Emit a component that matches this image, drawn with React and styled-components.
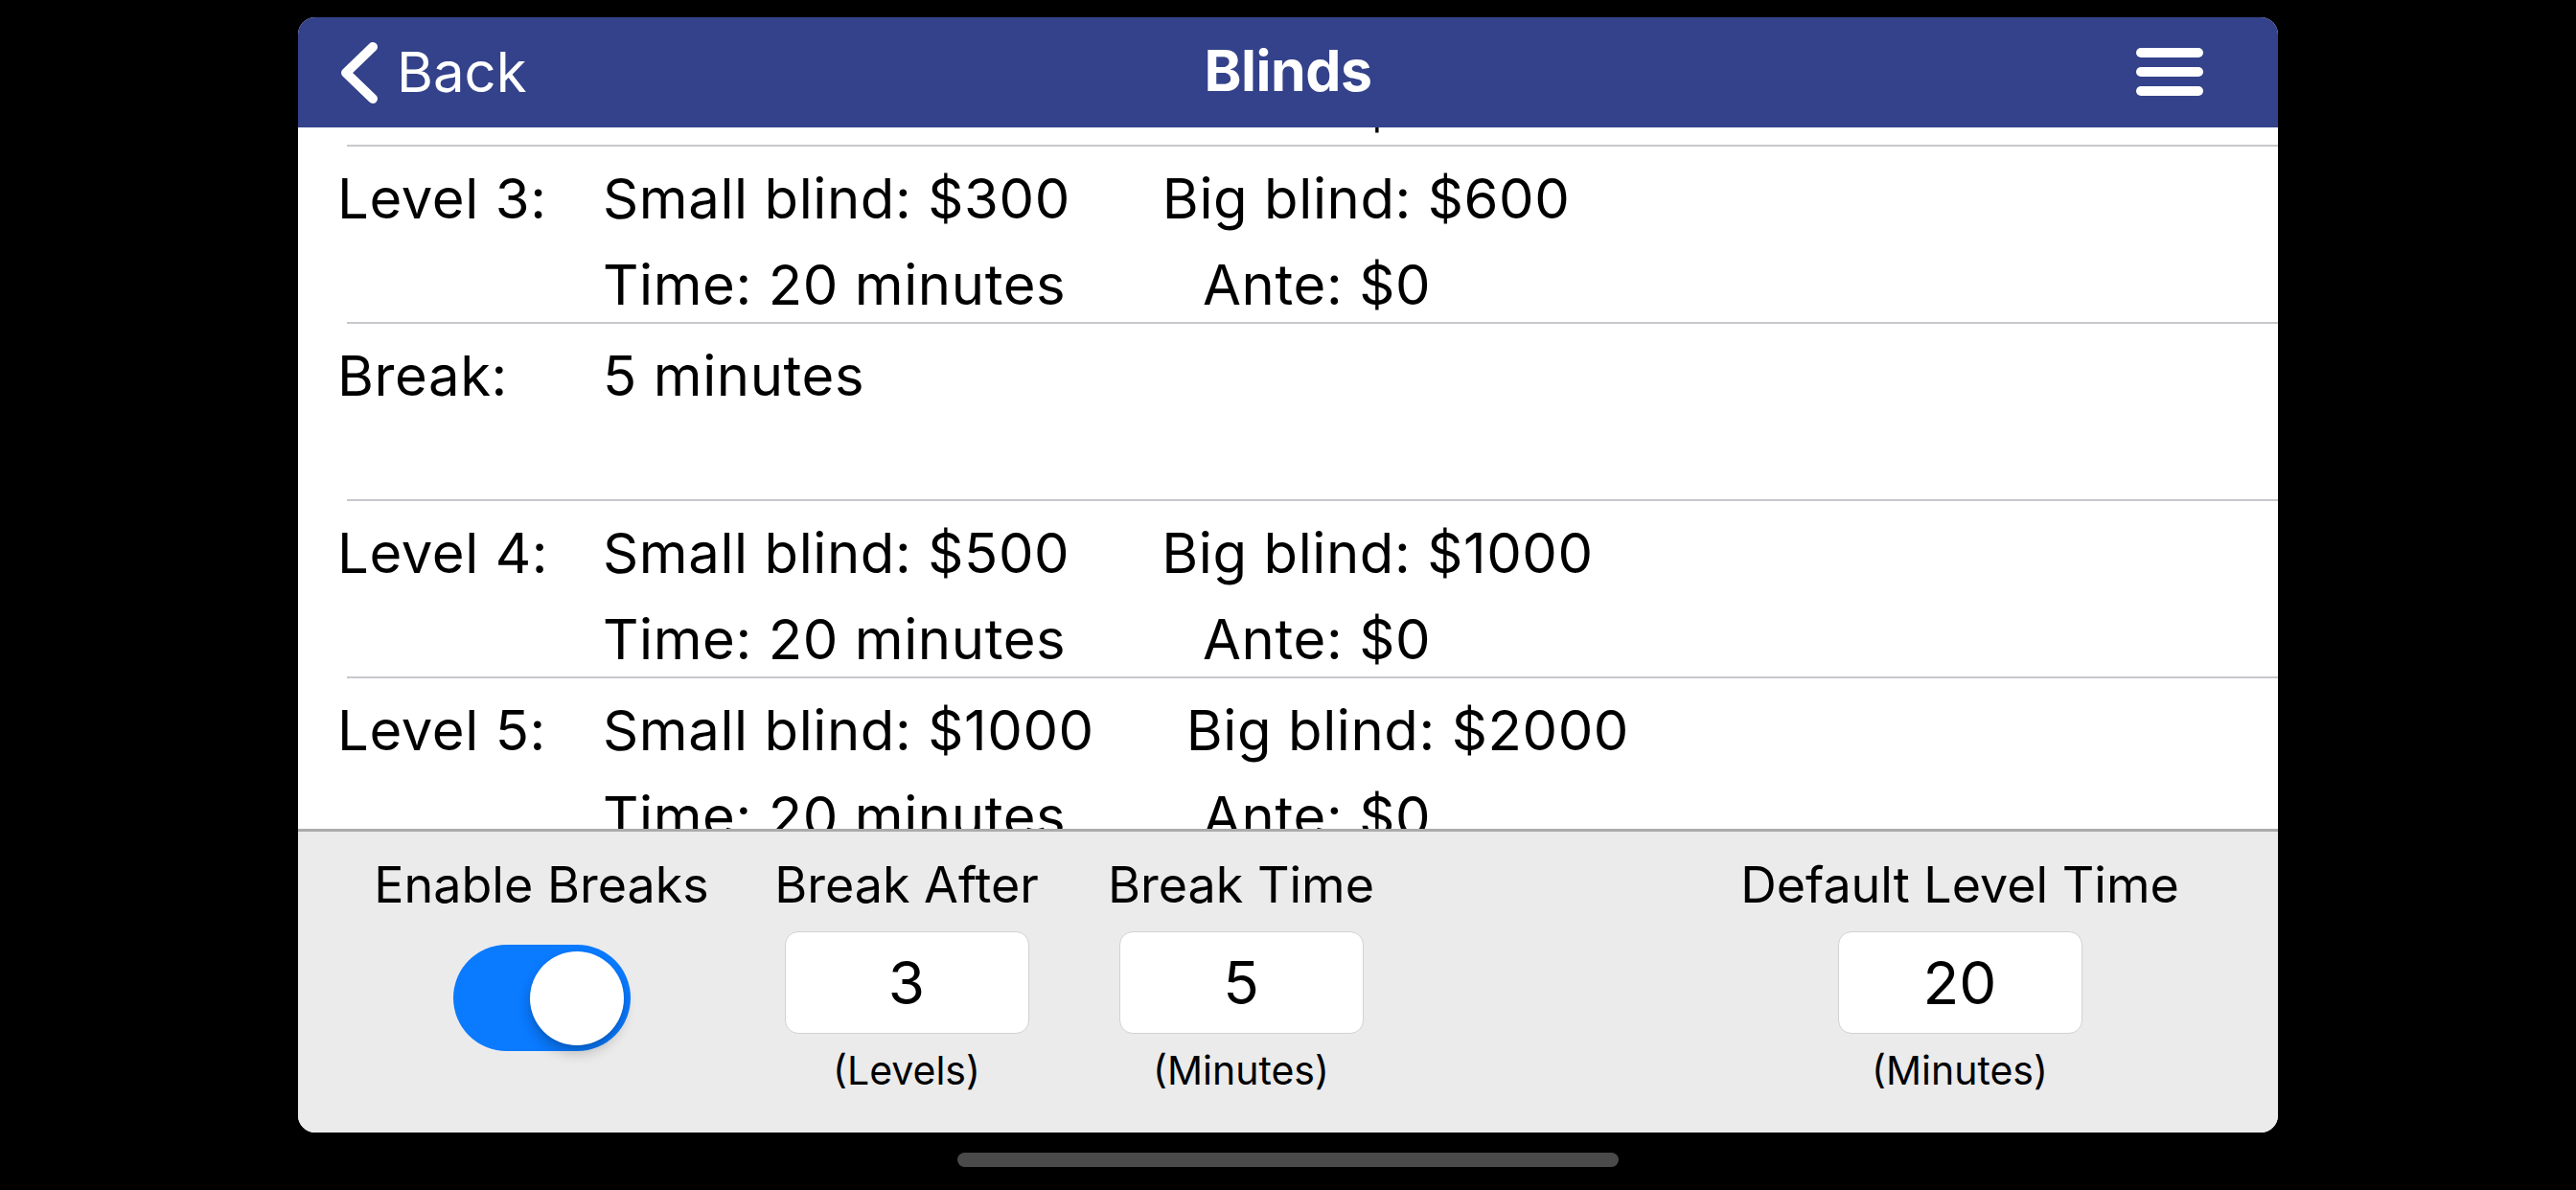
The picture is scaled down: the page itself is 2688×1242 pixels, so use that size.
import React from 'react';
import styled, { createGlobalStyle } from 'styled-components';

const GlobalStyle = createGlobalStyle`
  html, body {
    margin: 0;
    padding: 0;
    background: #000;
  }
  body {
    font-family: Inter, "Noto Sans", "Liberation Sans", sans-serif;
    color: #000;
  }
  * {
    box-sizing: border-box;
  }
`;

const levels = [
  { type: 'level', n: 2, small: 200, big: 400, time: 20, ante: 0 },
  { type: 'level', n: 3, small: 300, big: 600, time: 20, ante: 0 },
  { type: 'break', time: 5 },
  { type: 'level', n: 4, small: 500, big: 1000, time: 20, ante: 0 },
  { type: 'level', n: 5, small: 1000, big: 2000, time: 20, ante: 0 },
];

const App = () => {
  return (
    <>
      <GlobalStyle />
      <Screen>
        <Panel>
          <Header>
            <BackButton>
              <svg width="40" height="64" viewBox="0 0 40 64" fill="none">
                <path d="M34 5 L6 32 L34 59" stroke="#fff" strokeWidth="10" strokeLinecap="round" strokeLinejoin="round" />
              </svg>
              <span>Back</span>
            </BackButton>
            <Title>Blinds</Title>
            <MenuButton>
              <Bar />
              <Bar />
              <Bar />
            </MenuButton>
          </Header>

          <Content>
            <List>
              {levels.map((item, i) => (
                <React.Fragment key={i}>
                  {i > 0 && <Separator />}
                  {item.type === 'level' ? (
                    <Row>
                      <Line>
                        <RowLabel>Level {item.n}:</RowLabel>
                        <SmallBlind>Small blind: ${item.small}</SmallBlind>
                        <span>Big blind: ${item.big}</span>
                      </Line>
                      <Line>
                        <RowLabel />
                        <TimeCell>Time: {item.time} minutes</TimeCell>
                        <span>Ante: ${item.ante}</span>
                      </Line>
                    </Row>
                  ) : (
                    <Row>
                      <Line>
                        <RowLabel>Break:</RowLabel>
                        <span>{item.time} minutes</span>
                      </Line>
                    </Row>
                  )}
                </React.Fragment>
              ))}
            </List>
          </Content>

          <Footer>
            <Field $width={348}>
              <FieldLabel>Enable Breaks</FieldLabel>
              <Toggle>
                <Knob />
              </Toggle>
            </Field>
            <Field $width={278} $gap={68}>
              <FieldLabel>Break After</FieldLabel>
              <NumberBox>3</NumberBox>
              <Hint>(Levels)</Hint>
            </Field>
            <Field $width={280} $gap={70}>
              <FieldLabel>Break Time</FieldLabel>
              <NumberBox>5</NumberBox>
              <Hint>(Minutes)</Hint>
            </Field>
            <Field $width={460} $push>
              <FieldLabel>Default Level Time</FieldLabel>
              <NumberBox>20</NumberBox>
              <Hint>(Minutes)</Hint>
            </Field>
          </Footer>
        </Panel>
        <HomeIndicator />
      </Screen>
    </>
  );
};

const Screen = styled.div`
  width: 2688px;
  height: 1242px;
  background: #000;
  display: flex;
  flex-direction: column;
  align-items: center;
  padding-top: 18px;
`;

const Panel = styled.div`
  width: 2066px;
  height: 1164px;
  border-radius: 18px;
  overflow: hidden;
  background: #fff;
  display: flex;
  flex-direction: column;
`;

const Header = styled.div`
  height: 115px;
  flex-shrink: 0;
  background: #33428a;
  display: grid;
  grid-template-columns: 1fr auto 1fr;
  align-items: center;
  color: #fff;
  position: relative;
  z-index: 1;
`;

const BackButton = styled.div`
  display: flex;
  align-items: center;
  gap: 19px;
  padding-left: 44px;
  font-size: 58px;
  font-weight: 400;
  line-height: 1;

  span {
    margin-top: -2px;
  }
`;

const Title = styled.div`
  font-size: 59px;
  font-weight: 700;
  letter-spacing: -0.5px;
  line-height: 1;
  margin-top: -5px;
`;

const MenuButton = styled.div`
  justify-self: end;
  margin-right: 78px;
  margin-top: -2px;
  display: flex;
  flex-direction: column;
  gap: 10px;
`;

const Bar = styled.div`
  width: 70px;
  height: 10px;
  border-radius: 5px;
  background: #fff;
`;

const Content = styled.div`
  flex: 1;
  overflow: hidden;
  background: #fff;
`;

const List = styled.div`
  margin-top: -165px;
`;

const Separator = styled.div`
  height: 2px;
  margin-left: 51px;
  background: #c8c7cc;
`;

const Row = styled.div`
  height: 183px;
  padding: 9px 0 0 41px;
  font-size: 58px;
  letter-spacing: 0.6px;
`;

const Line = styled.div`
  display: flex;
  height: 90px;
  line-height: 90px;
  white-space: nowrap;
`;

const RowLabel = styled.span`
  width: 277px;
  flex-shrink: 0;
`;

const SmallBlind = styled.span`
  margin-right: 96px;
`;

const TimeCell = styled.span`
  width: 626px;
  flex-shrink: 0;
`;

const Footer = styled.div`
  height: 317px;
  flex-shrink: 0;
  background: #ebebeb;
  border-top: 3px solid #ababab;
  display: flex;
  align-items: flex-start;
  padding: 26px 102px 0 80px;
`;

const Field = styled.div`
  width: ${p => p.$width}px;
  margin-left: ${p => (p.$push ? 'auto' : `${p.$gap || 0}px`)};
  flex-shrink: 0;
  display: flex;
  flex-direction: column;
  align-items: center;
`;

const FieldLabel = styled.div`
  font-size: 52px;
  line-height: 60px;
  white-space: nowrap;
`;

const NumberBox = styled.div`
  margin-top: 18px;
  width: 255px;
  height: 107px;
  background: #fff;
  border: 1.5px solid #d2d2d2;
  border-radius: 14px;
  display: flex;
  align-items: center;
  justify-content: center;
  font-size: 62px;
  line-height: 1;
`;

const Hint = styled.div`
  margin-top: 13px;
  font-size: 41px;
  line-height: 50px;
`;

const Toggle = styled.div`
  margin-top: 32px;
  width: 185px;
  height: 111px;
  border-radius: 56px;
  background: #0a7aff;
  display: flex;
  align-items: center;
  justify-content: flex-end;
  padding-right: 7px;
`;

const Knob = styled.div`
  width: 98px;
  height: 98px;
  border-radius: 50%;
  background: #fff;
  box-shadow: 0 8px 14px rgba(0, 0, 0, 0.22), 0 2px 3px rgba(0, 0, 0, 0.08);
`;

const HomeIndicator = styled.div`
  margin-top: 21px;
  width: 690px;
  height: 15px;
  border-radius: 8px;
  background: #4a4a4a;
`;

export default App;
